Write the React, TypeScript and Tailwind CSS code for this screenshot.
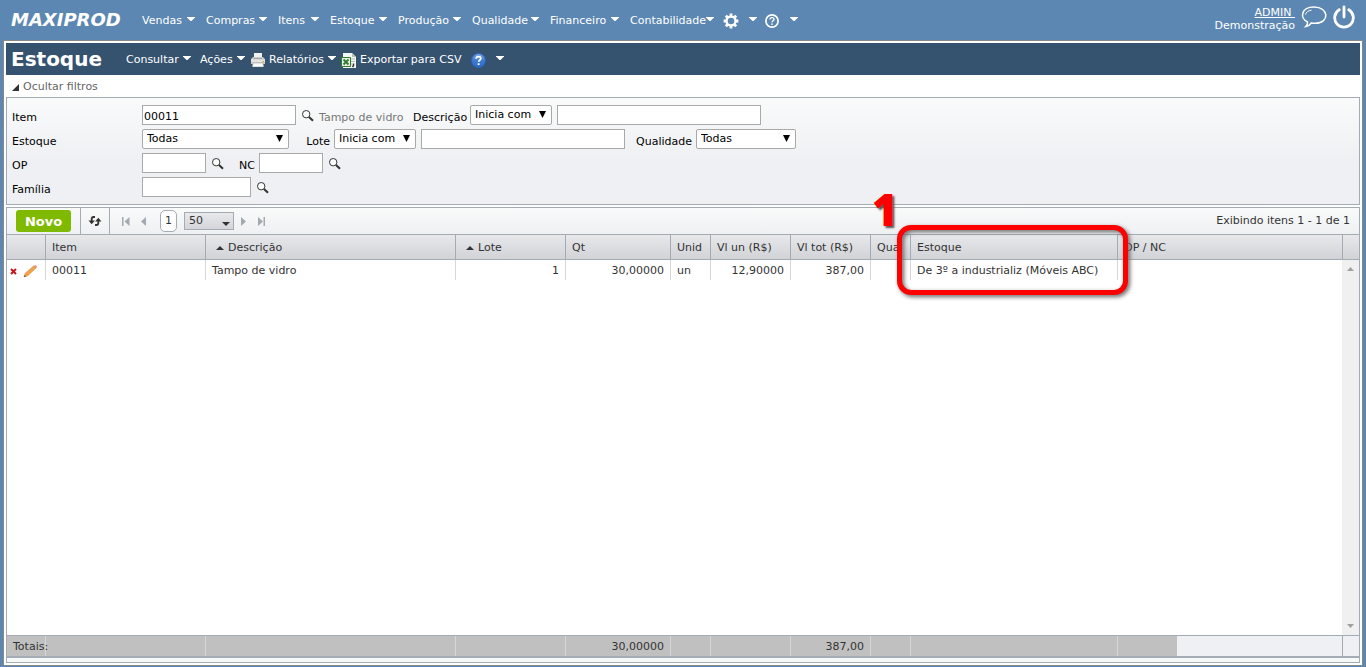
import type { ReactNode } from 'react';
import clsx from 'clsx';

const menus = [
  { label: 'Vendas', width: 'w-16' },
  { label: 'Compras', width: 'w-[72px]' },
  { label: 'Itens', width: 'w-[52px]' },
  { label: 'Estoque', width: 'w-[68px]' },
  { label: 'Produção', width: 'w-[74px]' },
  { label: 'Qualidade', width: 'w-[78px]' },
  { label: 'Financeiro', width: 'w-20' },
  { label: 'Contabilidade', width: 'w-[93px]' },
];

const columns = [
  { title: '', width: 'w-[39px]' },
  { title: 'Item', width: 'w-[160px]', value: '00011' },
  { title: 'Descrição', width: 'w-[250px]', value: 'Tampo de vidro', sorted: true },
  { title: 'Lote', width: 'w-[110px]', value: '1', sorted: true, right: true },
  { title: 'Qt', width: 'w-[105px]', value: '30,00000', total: '30,00000', right: true },
  { title: 'Unid', width: 'w-[40px]', value: 'un' },
  { title: 'Vl un (R$)', width: 'w-[80px]', value: '12,90000', right: true },
  { title: 'Vl tot (R$)', width: 'w-[80px]', value: '387,00', total: '387,00', right: true },
  { title: 'Qual', width: 'w-[40px]', value: '' },
  { title: 'Estoque', width: 'w-[207px]', value: 'De 3º a industrializ (Móveis ABC)' },
];

const Caret = () => (
  <svg className="w-2 h-1 shrink-0" viewBox="0 0 8 4" fill="#fff">
    <path d="M0 0h8v.5L4.500 4h-1L0 .5z" />
  </svg>
);

const MenuButton = ({ children, className, label }: { children: ReactNode; className: string; label?: string }) => (
  <button type="button" aria-label={label} className={clsx('flex items-center justify-between whitespace-nowrap text-white', className)}>
    {children}
    <span className="flex pb-[5px]">
      <Caret />
    </span>
  </button>
);

const GearIcon = () => (
  <svg className="w-4 h-4" viewBox="0 0 16 16" fill="none" stroke="#fff">
    <circle cx="8" cy="8" r="4.5" strokeWidth="2.4" />
    <path
      strokeWidth="2.8"
      d="M8 .6v2.6M8 12.8v2.6M.6 8h2.6M12.8 8h2.6M2.8 2.8l1.8 1.8M11.4 11.4l1.8 1.8M13.2 2.8l-1.8 1.8M4.6 11.4l-1.8 1.8"
    />
  </svg>
);

const HelpIcon = () => (
  <svg className="w-[14px] h-[14px]" viewBox="0 0 14 14" fill="none" stroke="#fff">
    <circle cx="7" cy="7" r="6.1" strokeWidth="1.7" />
    <path d="M5 5.6c0-2.6 4-2.5 4-.2C9 6.8 7 6.7 7 8.5M7 9.6v1.3" strokeWidth="1.3" />
  </svg>
);

const BlueHelpIcon = () => (
  <svg className="w-[15px] h-[15px]" viewBox="0 0 15 15" fill="none">
    <defs>
      <linearGradient id="help" x1="0" y1="0" x2="0" y2="1">
        <stop offset="0" stopColor="#7fa9e6" />
        <stop offset=".5" stopColor="#3f7ad0" />
        <stop offset="1" stopColor="#2e6cc8" />
      </linearGradient>
    </defs>
    <circle cx="7.5" cy="7.5" r="7" fill="url(#help)" stroke="#2c62b4" />
    <path d="M5.2 5.8c0-3 4.6-2.9 4.6-.2 0 1.6-2.2 1.5-2.2 3.2M7.6 10.2v1.8" stroke="#fff" strokeWidth="1.8" />
  </svg>
);

const PrinterIcon = () => (
  <svg className="w-[14px] h-[14px]" viewBox="0 0 14 14">
    <path d="M3 0h8v6H3z" fill="#f1f1f1" />
    <path d="M2 4h10l2 2v5H0V6z" fill="#c9c9c7" />
    <path d="M0 6.5h14V9H0z" fill="#e3e3e1" />
    <path d="M3 5h8v1H3z" fill="#a5a5a3" />
    <path d="M2 10h10l.6 4H1.4z" fill="#fafafa" stroke="#a9a9a7" strokeWidth=".6" />
    <path d="M11.5 8H13v1.2h-1.5z" fill="#e0a52c" />
  </svg>
);

const CsvIcon = () => (
  <svg className="w-[15px] h-[15px]" viewBox="0 0 15 15">
    <path d="M2 0h9l4 4v11H2z" fill="#f4f6f4" />
    <path d="M11 0v4h4z" fill="#b9c0ba" />
    <path d="M9 6h5M9 8.5h5M9 11h2" stroke="#b5bdb6" />
    <path d="M.5 4.5h9v9h-9z" fill="#e7f2e4" stroke="#2f7a2d" />
    <path d="M2.5 6.5l5 5M7.5 6.5l-5 5" stroke="#2f7a2d" strokeWidth="1.8" />
    <path d="M12.5 10.5v2l-1 1.5" stroke="#333" strokeWidth="1.5" fill="none" />
  </svg>
);

const SearchButton = ({ label }: { label: string }) => (
  <button type="button" aria-label={label} className="ml-1.5 mt-[5px] w-3 h-3 shrink-0">
    <svg viewBox="0 0 12 12" fill="none" stroke="#333">
      <circle cx="4.2" cy="4.2" r="3.7" fill="#fff" />
      <path d="M7 7l4 3.8" strokeWidth="2" />
    </svg>
  </button>
);

const TextBox = ({ id, className, value, label }: { id: string; className: string; value?: string; label?: string }) => (
  <input
    id={id}
    type="text"
    aria-label={label}
    defaultValue={value}
    className={clsx('h-5 border border-[#a9a9a9] bg-white px-px pt-0.5 leading-4 text-black', className)}
  />
);

const DropDown = ({ id, className, option, label }: { id: string; className: string; option: string; label?: string }) => (
  <span className={clsx('relative h-5 shrink-0', className)}>
    <select
      id={id}
      aria-label={label}
      className="block w-full h-5 appearance-none rounded-[2px] border border-[#a9a9a9] bg-white pl-1 leading-4 text-black"
    >
      <option>{option}</option>
    </select>
    <svg className="pointer-events-none absolute right-1.5 top-1.5 w-[7px] h-[7px]" viewBox="0 0 7 7">
      <path d="M0 0h7L3.500 7z" />
    </svg>
  </span>
);

const PagerButton = ({ d, label, className }: { d: string; label: string; className?: string }) => (
  <button type="button" aria-label={label} className={className}>
    <svg className="w-2 h-[9px]" viewBox="0 0 8 9" fill="#a3a9b1">
      <path d={d} />
    </svg>
  </button>
);

const SortArrow = () => (
  <svg className="mx-1 inline-block w-2 h-1" viewBox="0 0 8 4" fill="#333">
    <path d="M0 4h8L4 0z" />
  </svg>
);

const Columns = () => (
  <colgroup>
    {columns.map((c) => (
      <col key={c.title} className={c.width} />
    ))}
    <col />
  </colgroup>
);

const TopBar = () => (
  <header className="flex h-10 shrink-0 items-center text-white">
    <a href="#" className="w-[142px] pl-[11px] text-[18px] font-bold italic">MAXIPROD</a>
    <nav className="flex flex-1 items-center pt-0.5">
      {menus.map((m) => (
        <MenuButton key={m.label} className={clsx('pr-[11px]', m.width)}>
          {m.label}
        </MenuButton>
      ))}
      <MenuButton label="Configurações" className="w-[34px]">
        <GearIcon />
      </MenuButton>
      <MenuButton label="Ajuda" className="ml-2 w-[33px]">
        <HelpIcon />
      </MenuButton>
    </nav>
    <div className="pb-0.5 text-right leading-[13px]">
      <a href="#" className="block underline">ADMIN&nbsp;</a>
      <span className="block">Demonstração</span>
    </div>
    <button type="button" aria-label="Mensagens" className="ml-1.5 mb-1.5">
      <svg className="w-[26px] h-[22px]" viewBox="0 0 26 22" fill="none" stroke="#fff" strokeWidth="1.5">
        <path d="M6.5 16C-1.5 12 0 1 13 1c15 0 16 16 1.5 16.3-1.5 0-3-.1-4.2-.4C9 19 7 20.3 4.8 20.6 6.3 19.2 6.800 17.6 6.5 16z" />
        <path d="M4.5 8.5c.5-2.3 3-4 6-4.3" strokeWidth="1" />
      </svg>
    </button>
    <button type="button" aria-label="Sair" className="ml-1.5 mr-[11px] mb-1.5">
      <svg className="w-[22px] h-6" viewBox="0 0 22 24" fill="none" stroke="#fff" strokeWidth="2.8" strokeLinecap="round">
        <path d="M11 2v10M6.2 4.8a9.300 9.300 0 1 0 9.600 0" />
      </svg>
    </button>
  </header>
);

const TitleBar = () => (
  <div className="flex h-8 items-center bg-[#35526f] text-white">
    <h1 className="w-[120px] pl-[5px] text-[20px] font-bold">Estoque</h1>
    <div className="flex items-center pt-0.5">
      <MenuButton className="w-[65px]">Consultar</MenuButton>
      <MenuButton className="ml-[9px] w-[45px]">Ações</MenuButton>
      <MenuButton className="ml-1.5 w-[85px]">
        <PrinterIcon />
        Relatórios
      </MenuButton>
      <button type="button" className="ml-[5px] flex items-center gap-1 whitespace-nowrap">
        <CsvIcon />
        Exportar para CSV
      </button>
      <MenuButton label="Ajuda" className="ml-[10px] w-[33px]">
        <BlueHelpIcon />
      </MenuButton>
    </div>
  </div>
);

const Filters = () => (
  <form className="border border-[#a3abb4] bg-linear-to-b from-[#f9fafa] to-[#eff0f3] to-60% py-[7px] pl-[5px] leading-[26px] text-black">
    <div className="flex h-6">
      <label htmlFor="item" className="w-[130px]">Item</label>
      <TextBox id="item" className="w-[154px]" value="00011" />
      <SearchButton label="Buscar item" />
      <span className="ml-[5px] w-[94px] whitespace-nowrap text-[#777]">Tampo de vidro</span>
      <label htmlFor="descricao" className="w-[57px]">Descrição</label>
      <DropDown id="descricao" className="w-[82px]" option="Inicia com" />
      <TextBox id="descricao-texto" label="Descrição" className="ml-[5px] w-[204px]" />
    </div>
    <div className="flex h-6">
      <label htmlFor="estoque" className="w-[130px]">Estoque</label>
      <DropDown id="estoque" className="w-[147px]" option="Todas" />
      <label htmlFor="lote" className="w-[45px] pr-1 text-right">Lote</label>
      <DropDown id="lote" className="w-[82px]" option="Inicia com" />
      <TextBox id="lote-texto" label="Lote" className="ml-[5px] w-[204px]" />
      <label htmlFor="qualidade" className="w-[71px] pr-1 text-right">Qualidade</label>
      <DropDown id="qualidade" className="w-[100px]" option="Todas" />
    </div>
    <div className="flex h-6">
      <label htmlFor="op" className="w-[130px]">OP</label>
      <TextBox id="op" className="w-16" />
      <SearchButton label="Buscar OP" />
      <label htmlFor="nc" className="w-[35px] pr-1 text-right">NC</label>
      <TextBox id="nc" className="w-16" />
      <SearchButton label="Buscar NC" />
    </div>
    <div className="flex h-5">
      <label htmlFor="familia" className="w-[130px]">Família</label>
      <TextBox id="familia" className="w-[109px]" />
      <SearchButton label="Buscar família" />
    </div>
  </form>
);

const Toolbar = () => (
  <div className="flex h-[26px] shrink-0 items-center bg-linear-to-b from-[#f9fafa] to-[#eff0f2]">
    <button type="button" className="ml-[9px] h-[22px] w-[55px] rounded-[3px] bg-[#7fba00] pt-0.5 text-[13px] font-bold text-white">Novo</button>
    <button type="button" aria-label="Atualizar" className="ml-[9px] flex h-full w-[30px] items-center justify-center border-x border-[#a3abb4]">
      <svg className="w-[14px] h-[10px]" viewBox="0 0 14 10" fill="none" stroke="#333" strokeWidth="1.800">
        <path d="M7 1H5.500Q3.700 1 3.700 3v3.500M7 9h1.500q1.800 0 1.800-2V3.500" />
        <path d="M.5 4.500h6.400L3.700 8.300zM7.100 5.500h6.400L10.300 1.700z" fill="#333" stroke="none" />
      </svg>
    </button>
    <PagerButton label="Primeira página" className="ml-3" d="M0 0h1.500v9H0zM7.500 0v9L2.500 4.500z" />
    <PagerButton label="Página anterior" className="ml-[10px]" d="M6 0v9L1 4.500z" />
    <span className="ml-3 flex h-[22px] w-[17px] items-center justify-center rounded-[5px] border border-[#a3abb4] bg-white text-[#333]">1</span>
    <span className="relative ml-[7px]">
      <select
        aria-label="Itens por página"
        className="block h-[18px] w-[50px] appearance-none border border-[#a3abb4] bg-linear-to-b from-[#e7e9eb] to-[#d3d5d9] pl-1 text-[#333]"
      >
        <option>50</option>
      </select>
      <svg className="pointer-events-none absolute right-1 top-2.5 w-2 h-1" viewBox="0 0 8 4" fill="#333">
        <path d="M0 0h8L4 4z" />
      </svg>
    </span>
    <PagerButton label="Próxima página" className="ml-[6px]" d="M1 0v9l5-4.500z" />
    <PagerButton label="Última página" className="ml-[10px]" d="M0 0v9l5-4.500zM5.500 0H7v9H5.500z" />
    <span className="ml-auto pr-[9px]">Exibindo itens 1 - 1 de 1</span>
  </div>
);

const Callout = () => (
  <>
    <span className="pointer-events-none absolute left-[865px] -top-6 font-['Open_Sans',sans-serif] text-[44px] leading-[50px] font-extrabold text-[#f00] [text-shadow:2px_2px_2px_#555]">
      1
    </span>
    <span className="pointer-events-none absolute left-[890px] top-[17px] h-[70px] w-[231px] rounded-[14px] border-[5px] border-[#f00] drop-shadow-[2px_2px_2px_#666]" />
  </>
);

const Grid = () => (
  <section className="relative mt-0.5 flex flex-1 flex-col border border-[#a3abb4] text-[#333]">
    <Toolbar />
    <div className="flex h-[26px] shrink-0 border-y border-[#a3abb4] bg-linear-to-b from-[#e7e8ea] to-[#d1d3d7]">
      <table className="flex-1 w-full table-fixed border-separate border-spacing-0 text-left">
        <Columns />
        <thead>
          <tr className="h-6">
            {columns.map((c) => (
              <th key={c.title} className="overflow-hidden whitespace-nowrap border-r border-[#a3abb4] p-0 pl-1.5 pt-0.5 font-normal">
                {c.sorted && <SortArrow />}
                {c.title}
              </th>
            ))}
            <th className="p-0 pl-1.5 pt-0.5 font-normal">OP / NC</th>
          </tr>
        </thead>
      </table>
      <span className="w-[17px] shrink-0 border-l border-[#a3abb4]" />
    </div>
    <div className="flex flex-1 bg-white">
      <div className="flex-1">
        <table className="w-full table-fixed border-separate border-spacing-0">
          <Columns />
          <tbody>
            <tr className="h-5">
              {columns.map((c, i) => (
                <td
                  key={c.title}
                  className={clsx('whitespace-nowrap border-r border-[#d5d7db] p-0 pt-0.5', i === 0 ? 'pl-[3px]' : 'px-1.5', c.right && 'text-right')}
                >
                  {i === 0 ? (
                    <span className="flex items-center gap-1.5">
                      <button type="button" aria-label="Excluir">
                        <svg className="w-[7px] h-[7px]" viewBox="0 0 7 7" stroke="#c4161c" strokeWidth="2">
                          <path d="M1 1l5 5M6 1L1 6" />
                        </svg>
                      </button>
                      <button type="button" aria-label="Editar">
                        <svg className="w-[14px] h-[13px]" viewBox="0 0 14 13">
                          <path d="M1 12l1-3.500L10.500 1l2.500 2-8.500 8z" fill="#f2a04a" stroke="#d98432" strokeWidth=".5" />
                          <path d="M10.500 1q1.500-1.500 2.800-.2t-.3 2.200z" fill="#e8896c" />
                          <path d="M1 12l.6-2 1.500 1.300z" fill="#555" />
                        </svg>
                      </button>
                    </span>
                  ) : (
                    c.value
                  )}
                </td>
              ))}
              <td className="p-0" />
            </tr>
          </tbody>
        </table>
      </div>
      <div className="flex w-[17px] shrink-0 flex-col items-center justify-between bg-[#f0f0f0] py-[7px]">
        <svg className="w-[7px] h-1" viewBox="0 0 7 4" fill="#a0a0a0">
          <path d="M0 4h7L3.500 0z" />
        </svg>
        <svg className="w-[7px] h-1" viewBox="0 0 7 4" fill="#a0a0a0">
          <path d="M0 0h7L3.500 4z" />
        </svg>
      </div>
    </div>
    <div className="flex h-[23px] shrink-0 border-t border-b-2 border-[#a3abb4] bg-[#eff0f3]">
      <div className="flex-1">
        <table className="w-[1170px] table-fixed border-separate border-spacing-0 bg-[#c0c0c0]">
          <Columns />
          <tbody>
            <tr className="h-5">
              {columns.map((c, i) => (
                <td key={c.title} className="whitespace-nowrap border-r border-[#d5d7db] p-0 px-1.5 pt-0.5 text-right">
                  {i === 0 ? <span className="flex">Totais:</span> : c.total}
                </td>
              ))}
              <td className="p-0" />
            </tr>
          </tbody>
        </table>
      </div>
      <span className="w-[17px] shrink-0 border-l border-[#a3abb4]" />
    </div>
    <div className="h-1 shrink-0 bg-[#f7f8f8]" />
    <Callout />
  </section>
);

const App = () => (
  <div className="flex min-h-screen flex-col bg-[#5c87b2] pb-px font-['DejaVu_Sans',Verdana,sans-serif] text-[11px] leading-4">
    <TopBar />
    <main className="mx-[3px] flex flex-1 flex-col border border-[#888] bg-white p-0.5">
      <TitleBar />
      <button type="button" className="flex h-[22px] items-center gap-1 pl-[6px] pt-0.5 text-[#666]">
        <svg className="w-[7px] h-[7px]" viewBox="0 0 7 7" fill="#333">
          <path d="M7 0v7H0z" />
        </svg>
        Ocultar filtros
      </button>
      <Filters />
      <Grid />
    </main>
  </div>
);

export default App;
